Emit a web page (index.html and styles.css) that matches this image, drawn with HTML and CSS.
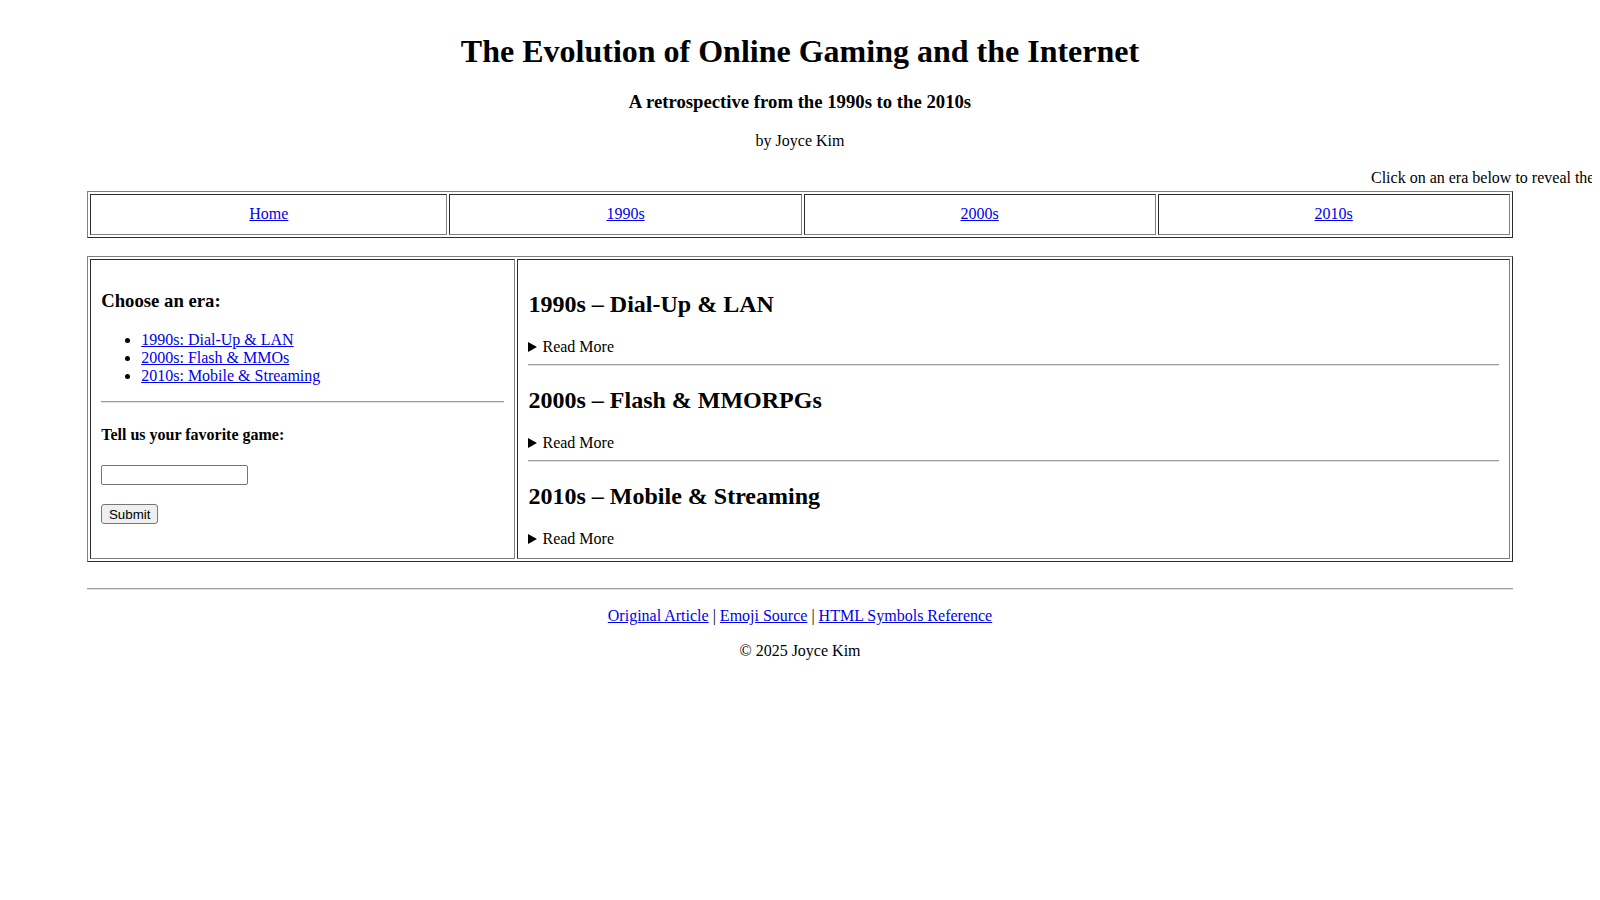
FILE: index.html
```html
<!DOCTYPE html>
<html lang="en">
<head>
<meta charset="utf-8">
<title>The Evolution of Online Gaming and the Internet</title>
<link rel="stylesheet" href="styles.css">
</head>
<body>
<header class="site-header">
  <h1 class="title">The Evolution of Online Gaming and the Internet</h1>
  <h3 class="subtitle">A retrospective from the 1990s to the 2010s</h3>
  <p class="byline">by Joyce Kim</p>
</header>
<div class="ticker"><span class="ticker-text">Click on an era below to reveal the story of how online gaming grew up with the Internet!</span></div>
<table class="nav-table">
  <tr>
    <td class="nav-cell"><a href="#">Home</a></td>
    <td class="nav-cell"><a href="#">1990s</a></td>
    <td class="nav-cell"><a href="#">2000s</a></td>
    <td class="nav-cell"><a href="#">2010s</a></td>
  </tr>
</table>
<table class="main-table">
  <tr>
    <td class="side-cell">
      <h3 class="side-heading">Choose an era:</h3>
      <ul class="era-list">
        <li><a href="#nineties">1990s: Dial-Up &amp; LAN</a></li>
        <li><a href="#noughties">2000s: Flash &amp; MMOs</a></li>
        <li><a href="#tens">2010s: Mobile &amp; Streaming</a></li>
      </ul>
      <hr class="rule">
      <h4 class="form-heading">Tell us your favorite game:</h4>
      <form class="fav-form">
        <input class="fav-input" type="text" aria-label="Favorite game"><br><br>
        <button class="fav-button" type="button">Submit</button>
      </form>
    </td>
    <td class="content-cell">
      <section class="era" id="nineties">
        <h2 class="era-title">1990s – Dial-Up &amp; LAN</h2>
        <details class="era-details"><summary class="era-summary">Read More</summary><p>Modems screeched, LAN parties filled basements, and games like Doom and Quake brought players together.</p></details>
        <hr class="rule">
      </section>
      <section class="era" id="noughties">
        <h2 class="era-title">2000s – Flash &amp; MMORPGs</h2>
        <details class="era-details"><summary class="era-summary">Read More</summary><p>Browser Flash games and massive online worlds like World of Warcraft took over.</p></details>
        <hr class="rule">
      </section>
      <section class="era" id="tens">
        <h2 class="era-title">2010s – Mobile &amp; Streaming</h2>
        <details class="era-details"><summary class="era-summary">Read More</summary><p>Smartphones and live streaming turned gaming into a global spectator sport.</p></details>
      </section>
    </td>
  </tr>
</table>
<footer class="site-footer">
  <hr class="rule">
  <p class="footer-links"><a href="#">Original Article</a> | <a href="#">Emoji Source</a> | <a href="#">HTML Symbols Reference</a></p>
  <p class="copyright">© 2025 Joyce Kim</p>
</footer>
</body>
</html>
```
FILE: styles.css
```css
body {
  margin: 8px;
  font-family: "Liberation Serif", "Times New Roman", serif;
  font-size: 16px;
  color: #000;
  background: #fff;
}

a { color: #0000ee; text-decoration: underline; }

.site-header { text-align: center; }

.title {
  font-size: 32px;
  font-weight: bold;
  margin: 25px 0 21.44px;
}

.subtitle {
  font-size: 18.72px;
  font-weight: bold;
  margin: 18.72px 0;
}

.byline { margin: 16px 0; }

.ticker {
  overflow: hidden;
  white-space: nowrap;
  padding-left: 1363px;
  margin-top: 19px;
  margin-bottom: 3.5px;
}

.nav-table,
.main-table {
  width: 90%;
  margin: 0 auto;
  border: 1px outset #808080;
  border-spacing: 2px;
  border-collapse: separate;
}

.nav-table { margin-bottom: 18.6px; }

.nav-cell {
  border: 1px inset #808080;
  padding: 10.5px 10px;
  text-align: center;
}

.side-cell,
.content-cell {
  border: 1px inset #808080;
  padding: 10px;
  vertical-align: top;
}

.side-cell { width: 30%; }

.side-heading {
  font-size: 18.72px;
  margin: 19.8px 0 18.72px;
}

.era-list {
  margin: 16px 0;
  padding-left: 40px;
}

.rule {
  border: 0;
  border-top: 1px solid #9d9d9d;
  border-bottom: 1px solid #e2e2e2;
  height: 0;
  margin: 8px 0;
}

.form-heading {
  font-size: 16px;
  margin: 23.3px 0 21.3px;
}

.fav-form { margin: 0; }

.fav-input {
  box-sizing: border-box;
  width: 147px;
  height: 20px;
  padding: 1px 2px;
  border: 1px solid #767676;
  border-radius: 2px;
  font-family: "Liberation Sans", Arial, sans-serif;
  font-size: 13.33px;
  vertical-align: baseline;
}

.fav-button {
  box-sizing: border-box;
  width: 57px;
  height: 20px;
  margin-top: 1px;
  padding: 0 6px;
  border: 1px solid #767676;
  border-radius: 3px;
  background: #efefef;
  font-family: "Liberation Sans", Arial, sans-serif;
  font-size: 13.33px;
  color: #000;
}

.era-title {
  font-size: 24px;
  margin: 21px 0 19.92px;
}

.era-summary {
  display: block;
  list-style: none;
  cursor: pointer;
}

.era-summary::-webkit-details-marker { display: none; }

.era-summary::before {
  content: "";
  display: inline-block;
  width: 0;
  height: 0;
  border-left: 9px solid #000;
  border-top: 5px solid transparent;
  border-bottom: 5px solid transparent;
  margin: 0 5px 0 0;
  vertical-align: 0;
}

.era-details p { margin: 8px 0; }

.site-footer {
  width: 90%;
  margin: 26px auto 0;
  text-align: center;
}

.footer-links { margin: 17px 0 16px; }
.copyright { margin: 17px 0 16px; }
```
